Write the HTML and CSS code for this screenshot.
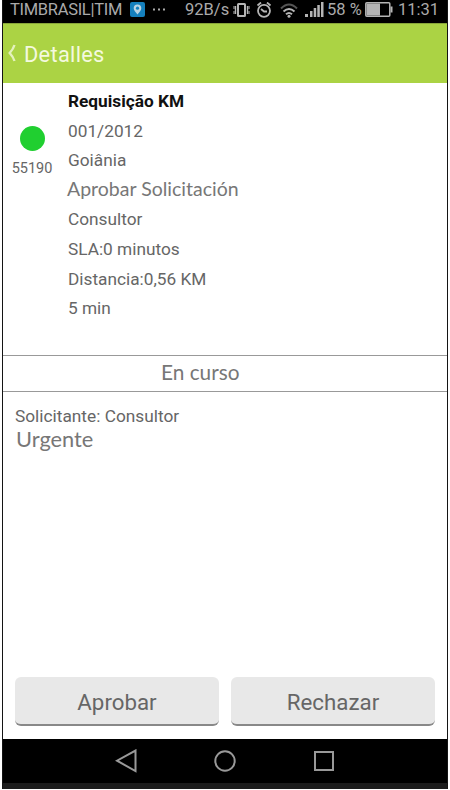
FILE: index.html
```html
<!DOCTYPE html>
<html lang="es">
<head>
<meta charset="utf-8">
<title>Detalles</title>
<link rel="stylesheet" href="styles.css">
</head>
<body>
<div class="phone">
  <div class="status">
    <span class="carrier">TIMBRASIL|TIM</span>
    <svg class="pin" width="15" height="15" viewBox="0 0 15 15"><rect width="15" height="15" rx="2" fill="#1580bd"/><path d="M7.5 12.5C5.500 10 3.700 8.200 3.700 6.200a3.800 3.800 0 0 1 7.600 0c0 2-1.800 3.800-3.800 6.300z" fill="#b9d4e3"/><circle cx="7.500" cy="6.200" r="1.600" fill="#1580bd"/></svg>
    <svg class="more" width="12" height="3" viewBox="0 0 12 3" fill="#aaa"><rect y=".5" width="2" height="2"/><rect x="5" y=".5" width="2" height="2"/><rect x="10" y=".5" width="2" height="2"/></svg>
    <span class="speed">92B/s</span>
    <svg class="vibrate" width="17" height="16" viewBox="0 0 17 16" fill="none" stroke="#b5b5b5"><rect x="5" y="2" width="7" height="12" rx=".5" stroke-width="2"/><path d="M2.500 4v8M14.500 4v8" stroke-width="1.400"/><path d="M1 4v3M1 9v3M16 4v3M16 9v3"/></svg>
    <svg class="alarm" width="16" height="16" viewBox="0 0 16 16" fill="none" stroke="#b5b5b5" stroke-width="1.800"><circle cx="8" cy="8.800" r="6"/><path d="M1.500 3.500l3.500-3M14.500 3.500l-3.500-3M5 7l3 2.500h3"/></svg>
    <svg class="wifi" width="18" height="16" viewBox="0 0 18 16" fill="none" stroke-width="2"><path d="M1 6.500q8-8 16 0" stroke="#555"/><path d="M3.500 9.500q5.500-5 11 0M6 12.300q3-2.500 6 0" stroke="#b5b5b5"/><circle cx="9" cy="14.300" r="1.500" fill="#b5b5b5"/></svg>
    <svg class="signal" width="19" height="15" viewBox="0 0 19 15" fill="#b5b5b5"><rect y="12" width="3" height="3"/><rect x="5" y="9" width="2.500" height="6"/><rect x="8.700" y="6" width="2.500" height="9"/><rect x="12.300" y="3" width="2.500" height="12"/><rect x="16" width="2.500" height="15"/></svg>
    <span class="percent">58 %</span>
    <svg class="battery" width="28" height="15" viewBox="0 0 28 15"><rect x=".8" y=".8" width="24" height="13.400" rx="1" fill="none" stroke="#b5b5b5" stroke-width="1.500"/><path d="M1.500 1.500h13.500v12h-13.500z" fill="#b5b5b5"/><path d="M25.500 4.500h2v6h-2z" fill="#b5b5b5"/></svg>
    <span class="clock">11:31</span>
  </div>
  <header class="bar">
    <svg width="8" height="18" viewBox="0 0 8 18" fill="none" stroke="#e4f1bd" stroke-width="2.400"><path d="M6.500 1C5.300 5 3.500 7 1.700 9c1.800 2 3.600 4 4.800 8"/></svg>
    <h1>Detalles</h1>
  </header>
  <section class="details">
    <div class="marker"><span class="dot"></span><span class="code">55190</span></div>
    <div class="lines">
      <p class="title">Requisição KM</p>
      <p class="number">001/2012</p>
      <p class="city">Goiânia</p>
      <p class="humanist action">Aprobar Solicitación</p>
      <p class="role">Consultor</p>
      <p class="sla">SLA:0 minutos</p>
      <p class="distance">Distancia:0,56 KM</p>
      <p class="time">5 min</p>
    </div>
  </section>
  <div class="state humanist"><span>En curso</span></div>
  <section class="request">
    <p class="applicant">Solicitante: Consultor</p>
    <p class="humanist urgent">Urgente</p>
  </section>
  <div class="actions"><button>Aprobar</button><button>Rechazar</button></div>
  <nav class="nav">
    <svg width="22" height="24" viewBox="0 0 22 24"><path d="M20.500 1.500v20.500L2 11.700z"/></svg>
    <svg width="22" height="24" viewBox="0 0 22 24"><circle cx="11" cy="12" r="9.700"/></svg>
    <svg width="22" height="24" viewBox="0 0 22 24"><rect x="2" y="3" width="18" height="18"/></svg>
  </nav>
  <div class="foot"></div>
</div>
</body>
</html>
```
FILE: styles.css
```css
* { box-sizing: border-box; }
body { margin: 0; background: #fff; font-family: Roboto, sans-serif; color: #666; }
h1, p { margin: 0; font-weight: 400; }
svg { flex: none; display: block; }
.phone {
  width: 446px; height: 789px; margin-left: 2px;
  border: solid #141414; border-width: 0 1px;
  display: flex; flex-direction: column; overflow: hidden;
}
.status {
  height: 23px; padding: 0 0 4px 7px; background: #000; color: #aaa;
  display: flex; align-items: center; font-size: 16.5px; white-space: nowrap;
}
.carrier { width: 120px; letter-spacing: -.3px; }
.more { margin-left: 8px; }
.speed { width: 45px; margin-left: 20px; }
.vibrate { margin-left: 3px; }
.alarm { margin-left: 6px; }
.wifi { margin-left: 8px; }
.signal { margin-left: 7px; }
.percent { width: 34px; margin-left: 3px; }
.battery { margin-left: 4px; }
.clock { margin-left: 5px; }
.bar {
  height: 60px; padding: 1px 0 0 5px; background: #abd344; border-top: 1px solid #88a63a;
  display: flex; align-items: center; gap: 8px; color: #f4f9df;
}
.bar svg { margin-bottom: 2px; }
.bar h1 { font-size: 21.8px; letter-spacing: .3px; }
.details { height: 272px; padding-top: 4px; display: flex; }
.marker { width: 58px; padding-top: 39px; display: flex; flex-direction: column; align-items: center; }
.dot { width: 25px; height: 25px; border-radius: 50%; background: #20cf30; }
.code { margin-top: 8px; font-size: 14.5px; line-height: 20px; }
.lines { padding-left: 7px; font-size: 17.25px; line-height: 29.6px; white-space: nowrap; }
.title { font-weight: 700; color: #111; }
.humanist { font-family: Lato, sans-serif; color: #777; }
.action { height: 29.6px; font-size: 19.5px; line-height: 26px; margin-left: -1px; }
.state {
  height: 37px; border: solid #999; border-width: 1px 0;
  padding-left: 158px; font-size: 20.8px; line-height: 32px;
}
.request { flex: 1; padding: 13px 0 0 12px; }
.applicant { font-size: 17.3px; line-height: 22px; }
.urgent { font-size: 21.8px; line-height: 24px; margin-left: 1px; }
.actions { height: 62px; padding: 0 12px; display: flex; gap: 12px; }
.actions button {
  flex: 1; height: 49px; padding: 3px 0 0; border: 0; border-bottom: 2px solid #888; border-radius: 6px;
  background: #e8e8e8; color: #666; font: 22.3px Roboto, sans-serif;
}
.nav { height: 44px; background: #000; display: flex; justify-content: center; align-items: center; gap: 77px; }
.nav svg { fill: none; stroke: #999; stroke-width: 2; }
.foot { height: 6px; background: #1c1c1c; }
```
